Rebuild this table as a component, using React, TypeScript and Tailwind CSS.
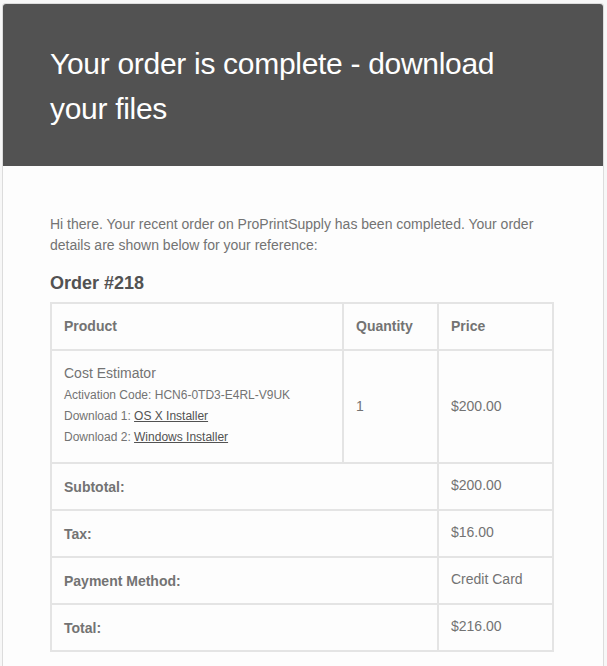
import React from 'react'

// Email: order complete with download links
const rows = [
  { label: 'Subtotal:', value: '$200.00' },
  { label: 'Tax:', value: '$16.00' },
  { label: 'Payment Method:', value: 'Credit Card' },
  { label: 'Total:', value: '$216.00' },
]

const App = () => {
  return (
    <div className="min-h-[666px] bg-[#f7f7f7] pt-[3px]" style={{ fontFamily: '"Liberation Sans", Arial, Helvetica, sans-serif' }}>
      {/* Card */}
      <div className="ml-[2px] w-[602px] rounded-[3px] border border-[#dcdcdc] bg-[#fdfdfd]">
        {/* Header */}
        <div className="rounded-t-[3px] bg-[#525252] pl-[47px] pr-[48px] pt-[37px] pb-[35px]">
          <h1 className="text-[30px] font-light leading-[1.5] tracking-[-0.3px] text-white">Your order is complete - download your files</h1>
        </div>

        {/* Body */}
        <div className="pl-[47px] pr-[48px] py-[48px] text-[14px] leading-[1.5] text-[#737373]">
          <p className="mb-[16px]">
            Hi there. Your recent order on ProPrintSupply has been completed. Your order details are shown below for your reference:
          </p>
          <h2 className="mb-[7px] text-[18px] font-bold leading-[1.3] text-[#525252]">Order #218</h2>

          <table className="w-[504px] table-fixed border-separate border-spacing-0 border border-[#e4e4e4] text-left">
            <thead>
              <tr>
                <th className="w-[292px] border border-[#e4e4e4] p-3 font-bold">Product</th>
                <th className="w-[95px] border border-[#e4e4e4] p-3 font-bold">Quantity</th>
                <th className="w-[115px] border border-[#e4e4e4] p-3 font-bold">Price</th>
              </tr>
            </thead>
            <tbody>
              <tr>
                <td className="border border-[#e4e4e4] px-3 pt-3 pb-[15px] align-middle">
                  Cost Estimator
                  <br />
                  <small className="text-[12px]">Activation Code: HCN6-0TD3-E4RL-V9UK</small>
                  <br />
                  <small className="text-[12px]">
                    Download 1: <a href="#" className="text-[#525252] underline">OS X Installer</a>
                  </small>
                  <br />
                  <small className="text-[12px]">
                    Download 2: <a href="#" className="text-[#525252] underline">Windows Installer</a>
                  </small>
                </td>
                <td className="border border-[#e4e4e4] p-3 align-middle">1</td>
                <td className="border border-[#e4e4e4] p-3 align-middle">$200.00</td>
              </tr>
            </tbody>
            <tfoot>
              {rows.map((r) => (
                <tr key={r.label}>
                  <th colSpan={2} className="border border-[#e4e4e4] px-3 pt-[13px] pb-[11px] font-bold">{r.label}</th>
                  <td className="border border-[#e4e4e4] px-3 pt-[11px] pb-[13px]">{r.value}</td>
                </tr>
              ))}
            </tfoot>
          </table>
        </div>
      </div>
    </div>
  )
}

export default App
